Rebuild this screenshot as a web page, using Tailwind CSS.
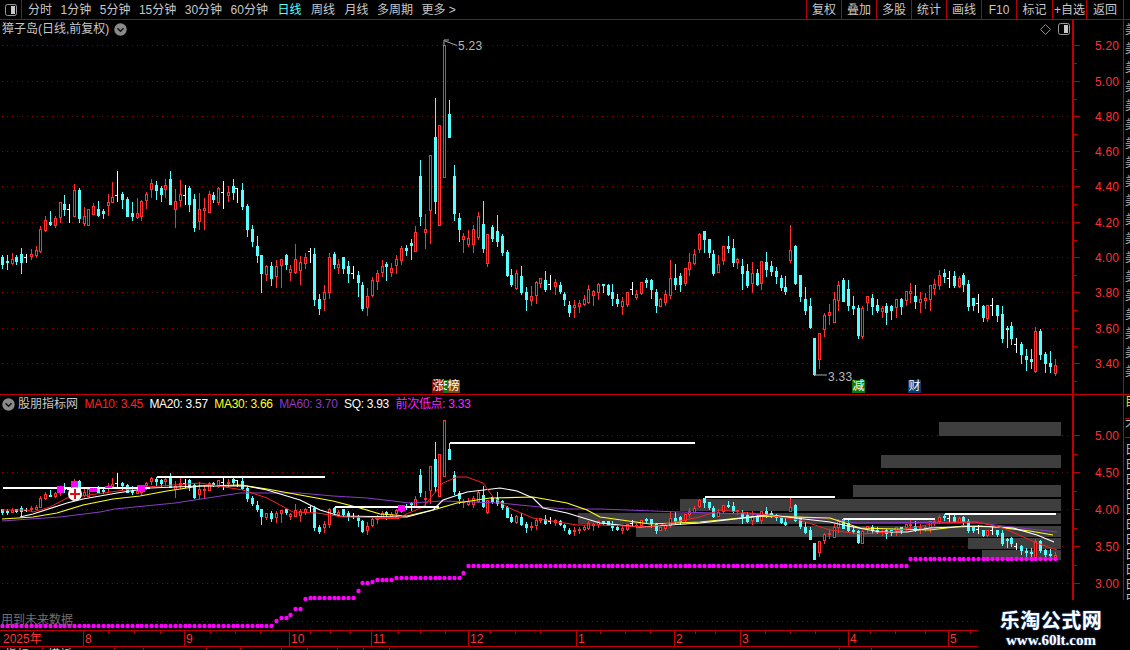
<!DOCTYPE html>
<html lang="zh-CN">
  <head>
    <meta charset="UTF-8" />
    <title>獐子岛 日线</title>
    <script src="https://cdn.jsdelivr.net/npm/@tailwindcss/browser@4"></script>
  </head>
  <body class="bg-black">
    <div class="relative w-[1130px] h-[650px] overflow-hidden bg-black text-[#c8c8c8] text-[12px] font-['Liberation_Sans','Noto_Sans_CJK_SC',sans-serif]">
      <!-- Top toolbar -->
      <header class="flex h-[20px] border-b border-[#b00000] leading-[20px]">
        <div class="flex w-[22px] items-center justify-center border-r border-[#b00000]">
          <svg width="12" height="12" viewBox="0 0 12 12"><rect x="0.5" y="0.5" width="11" height="11" rx="2" fill="none" stroke="#9a9a9a" /><rect x="6" y="2" width="4" height="8" fill="#c8c8c8" /></svg>
        </div>
        <nav class="flex gap-[8.5px] pl-[6px]">
          <span>分时</span><span>1分钟</span><span>5分钟</span><span>15分钟</span><span>30分钟</span><span>60分钟</span>
          <span class="text-[#55ffff] ml-[1px]">日线</span><span class="ml-[1px]">周线</span><span class="ml-[1px]">月线</span><span>多周期</span><span>更多 &gt;</span>
        </nav>
        <div class="ml-auto flex text-center">
          <span class="w-[35px] border-l border-[#b00000]">复权</span>
          <span class="w-[35px] border-l border-[#b00000]">叠加</span>
          <span class="w-[35px] border-l border-[#b00000]">多股</span>
          <span class="w-[35px] border-l border-[#b00000]">统计</span>
          <span class="w-[35px] border-l border-[#b00000]">画线</span>
          <span class="w-[35px] border-l border-[#b00000]">F10</span>
          <span class="w-[36px] border-l border-[#b00000]">标记</span>
          <span class="w-[34px] border-l border-[#b00000] whitespace-nowrap">+自选</span>
          <span class="w-[37px] border-l border-[#b00000]">返回</span>
          <span class="w-[7px] border-l border-[#b00000]"></span>
        </div>
      </header>

      <!-- Price panel -->
      <section class="flex h-[375px] border-b border-[#c00000]">
        <div class="relative w-[1072px]">
          <svg id="price" class="absolute inset-0" width="1072" height="374" viewBox="0 20 1072 374" shape-rendering="crispEdges"></svg>
          <div class="absolute left-[2px] top-[1px] flex items-center gap-[5px] leading-[16px]">
            <span>獐子岛(日线,前复权)</span>
            <svg width="13" height="13" viewBox="0 0 13 13"><circle cx="6.5" cy="6.5" r="6.2" fill="#8a8a8a" /><path d="M3.5 5.2 6.5 8.2 9.5 5.2" fill="none" stroke="#111" stroke-width="1.5" /></svg>
          </div>
          <div class="absolute right-[2px] top-[3px] flex items-center gap-[7px]">
            <svg width="11" height="11" viewBox="0 0 11 11"><path d="M5.5 .5 10.5 5.5 5.5 10.5 .5 5.5Z" fill="none" stroke="#8a8a8a" /></svg>
            <svg width="12" height="12" viewBox="0 0 12 12"><rect x="0.5" y="0.5" width="11" height="11" rx="2" fill="none" stroke="#9a9a9a" /><rect x="6" y="2" width="4" height="8" fill="#c8c8c8" /></svg>
          </div>
          <span class="absolute left-[458px] top-[19px] text-[12px] leading-[15px] tracking-[0.3px] text-[#b8b8b8]">5.23</span>
          <span class="absolute left-[828px] top-[350px] text-[12px] leading-[15px] tracking-[0.3px] text-[#b8b8b8]">3.33</span>
          <!-- Event tags -->
          <span class="absolute left-[432px] top-[360px] h-[13px] w-[13px] bg-[#7a0c0c] text-center text-[12px] leading-[13px] text-white">涨</span>
          <span class="absolute left-[443px] top-[360px] h-[13px] w-[5px] overflow-hidden bg-[#0a7a0a] text-[12px] leading-[13px] text-white">5</span>
          <span class="absolute left-[447px] top-[360px] h-[13px] w-[13px] bg-[#7a4a10] text-center text-[12px] leading-[13px] text-white">榜</span>
          <span class="absolute left-[852px] top-[360px] h-[13px] w-[13px] bg-[#0a7a0a] text-center text-[12px] leading-[13px] text-white">减</span>
          <span class="absolute left-[908px] top-[360px] h-[13px] w-[13px] bg-[#0a3a6e] text-center text-[12px] leading-[13px] text-white">财</span>
        </div>
        <div class="w-[51px] border-l-2 border-[#c00000]">
          <svg id="priceAxis" width="49" height="374" viewBox="0 20 49 374"></svg>
        </div>
        <div class="flex w-[7px] flex-col gap-[6px] overflow-hidden border-l border-[#c00000] pt-[4px] pl-[1px] text-[12px] leading-[13px] text-[#b0b0b0]">
          <span>美</span><span>美</span><span>美</span><span>美</span><span>美</span><span>美</span><span>美</span><span>美</span><span>美</span><span>美</span><span>美</span><span>美</span><span>美</span><span>美</span><span>美</span><span>美</span><span>美</span><span>美</span><span>美</span>
        </div>
      </section>

      <!-- Indicator panel -->
      <section class="flex h-[235px]">
        <div class="relative w-[1072px]">
          <svg id="indicator" class="absolute inset-0" width="1072" height="235" viewBox="0 395 1072 235" shape-rendering="crispEdges"></svg>
          <div class="absolute left-[2px] top-[1px] flex items-center gap-[6.5px] leading-[16px] whitespace-nowrap">
            <svg class="-mr-[3.5px]" width="13" height="13" viewBox="0 0 13 13"><circle cx="6.5" cy="6.5" r="6.2" fill="#8a8a8a" /><path d="M3.5 5.2 6.5 8.2 9.5 5.2" fill="none" stroke="#111" stroke-width="1.5" /></svg>
            <span>股朋指标网</span>
            <span class="tracking-[-0.3px] text-[#ff2020]">MA10: 3.45</span>
            <span class="tracking-[-0.3px] text-white">MA20: 3.57</span>
            <span class="tracking-[-0.3px] text-[#ffff20]">MA30: 3.66</span>
            <span class="tracking-[-0.3px] text-[#8a3cc8]">MA60: 3.70</span>
            <span class="tracking-[-0.3px] text-white">SQ: 3.93</span>
            <span class="tracking-[-0.3px] text-[#ff20ff]">前次低点: 3.33</span>
          </div>
          <span class="absolute left-[1px] top-[218px] text-[12px] leading-[14px] text-[#707070]">用到未来数据</span>
        </div>
        <div class="w-[51px] border-l-2 border-[#c00000]">
          <svg id="indicatorAxis" width="49" height="235" viewBox="0 395 49 235"></svg>
        </div>
        <div class="flex w-[7px] flex-col overflow-hidden border-l border-[#c00000] pl-[1px] text-[12px] leading-[15px] text-[#c0c0c0]">
          <span class="h-[23px] text-[#e0e000]">目</span>
          <span class="h-[19px] border-t border-[#c00000]">不</span>
          <span class="border-t border-[#c00000] pt-[5px]">日</span>
          <span>日</span><span>日</span><span>日</span><span>日</span><span>日</span><span>日</span><span>日</span><span>日</span><span>日</span><span>日</span><span>日</span>
        </div>
      </section>

      <!-- Time axis -->
      <footer class="relative h-[17px] border-y border-[#c00000] text-[12px] leading-[17px] text-[#ff3232]">
        <div class="flex h-full">
          <span class="w-[83px] pl-[3px]">2025年</span>
          <span class="w-[101px] border-l border-[#c00000] pl-[1px]">8</span>
          <span class="w-[105px] border-l border-[#c00000] pl-[1px]">9</span>
          <span class="w-[82px] border-l border-[#c00000] pl-[1px]">10</span>
          <span class="w-[97px] border-l border-[#c00000] pl-[1px]">11</span>
          <span class="w-[108px] border-l border-[#c00000] pl-[1px]">12</span>
          <span class="w-[98px] border-l border-[#c00000] pl-[1px]">1</span>
          <span class="w-[66px] border-l border-[#c00000] pl-[1px]">2</span>
          <span class="w-[108px] border-l border-[#c00000] pl-[1px]">3</span>
          <span class="w-[100px] border-l border-[#c00000] pl-[1px]">4</span>
          <span class="border-l border-[#c00000] pl-[1px]">5</span>
        </div>
        <svg id="timeTicks" class="absolute inset-0" width="978" height="4"></svg>
      </footer>

      <!-- Bottom tabs, mostly cut off by the window -->
      <div class="flex h-[3px] overflow-hidden pt-[1px] text-[12px] leading-[14px] text-[#c8c8c8]">
        <span class="w-[43px] border-r border-[#c00000] pl-[5px]">指标</span>
        <span class="w-[72px] border-r border-[#c00000] pl-[5px]">模板</span>
        <span class="w-[29px] border-r border-[#c00000]"></span>
        <span class="w-[63px] border-r border-[#c00000]"></span>
        <span class="w-[34px] border-r border-[#c00000]"></span>
        <span class="w-[41px] border-r border-[#c00000]"></span>
        <span class="w-[26px] border-r border-[#c00000]"></span>
        <span class="w-[30px] border-r border-[#c00000]"></span>
        <span class="w-[26px] border-r border-[#c00000]"></span>
        <span class="w-[26px] border-r border-[#c00000]"></span>
        <span class="w-[450px] border-r border-[#c00000]"></span>
        <span class="w-[32px] border-r border-[#c00000]"></span>
      </div>

      <!-- Site watermark over the corner of the chart -->
      <div class="absolute right-0 bottom-0 flex h-[50px] w-[152px] flex-col items-center bg-black pr-[6px] pt-[7px] text-white">
        <span class="text-[20px] leading-[25px] font-bold tracking-[0.5px] whitespace-nowrap font-['Noto_Sans_CJK_SC',sans-serif] [text-shadow:0_0_2px_#3a6fd0]">乐淘公式网</span>
        <span class="text-[15px] leading-[17px] font-bold whitespace-nowrap font-['Liberation_Serif',serif] [text-shadow:0_0_2px_#3a6fd0]">www.60lt.com</span>
      </div>
    </div>

    <script>
      // [type, zoomX, high, bodyTop, bodyBottom, low], in crop pixels
      const segments = [
        [0, 160, `c 7 285 291 312 324|c 22 286 303 305 327|r 37 280 298 310 313|c 50 286 291 303 312|c 64 265 282 306 339|w 79 283 292 292 306|r 94 267 282 288 297|r 109 258 271 285 290|r 122 198 207 274 277|r 136 168 180 210 214|c 151 153 186 192 195|r 166 168 174 195 201|r 181 126 126 170 186|c 194 105 132 147 165|w 208 132 148 150 187|r 223 72 91 167 168|c 238 85 91 174 187|r 253 141 169 190 194|r 265 148 148 194 196|r 280 129 138 162 163|c 295 123 147 164 168|c 310 147 153 159 174|r 325 103 127 134 165|r 337 66 112 125 126|w 352 33 105 107 123|c 367 96 102 117 144|c 382 111 117 168 168|c 397 126 159 168 180|r 412 114 160 171 174|r 424 120 123 167 180|r 439 96 102 120 144|r 454 57 70 87 111|c 469 63 75 90 117|c 484 78 84 102 123|r 496 57 76 87 111|c 511 33 57 132 132|r 526 87 124 147 201|r 541 60 102 120 138|w 556 75 106 108 132|c 568 78 84 132 153|c 583 102 117 201 213|r 598 99 148 183 207|r 613 114 144 150 207|r 628 93 102 155 156|c 640 96 105 117 126|r 655 81 84 126 132|w 670 63 97 99 144|r 685 78 96 105 123|c 700 57 78 96 117|w 712 84 85 87 126|c 727 69 90 138 147|c 742 132 138 207 228|c 757 195 207 243 258`],
        [255, 190, `c 7 138 168 195 216|c 19 195 195 249 306|r 34 225 228 252 270|c 49 216 228 264 285|r 64 210 228 258 291|r 79 207 207 225 291|c 94 192 195 222 237|r 106 225 237 246 270|r 121 162 207 246 249|r 136 198 216 240 282|r 151 189 201 219 234|w 166 174 182 184 216|c 178 174 192 327 345|c 193 312 327 354 372|r 208 285 306 327 360|r 223 189 201 306 324|c 238 186 192 222 234|r 250 207 222 231 249|c 265 201 201 234 249|c 280 213 228 249 276|w 295 228 250 252 264|c 310 243 255 276 318|c 322 276 285 354 360|r 337 294 318 351 375|r 352 261 270 315 318|r 367 240 249 273 297|r 382 210 228 246 258|c 394 216 222 228 270|r 409 219 234 246 258|r 424 195 207 225 249|r 439 168 174 210 222|c 454 165 174 180 195|c 469 147 159 165 207|r 481 108 126 183 183`],
        [380, 30, `c 121 390 438 558 585|r 136 552 597 606 654|r 151 375 375 540 639|c 166 204 321 513 549|r 178 285 285 585 585|r 193 45 45 441 441|c 208 210 252 321 321|c 223 405 438 549 570|c 238 549 564 597 633|r 250 609 618 627 666|r 265 600 624 642 648|r 280 585 597 642 666|r 295 546 558 621 627|c 310 513 582 654 666|r 322 612 612 699 708|c 337 585 591 624 633|c 352 555 603 633 648|c 367 612 618 666 675`],
        [505, 220, `c 7 90 96 165 168|c 19 147 165 192 198|r 34 150 159 204 207|c 49 138 168 216 222|c 64 201 216 237 270|r 79 198 228 240 255|r 94 183 186 225 249|r 106 174 174 189 201|c 121 153 180 207 213|w 136 165 192 194 207|r 151 177 186 198 222|c 166 186 195 213 219|c 178 216 222 237 255|c 193 243 255 276 288|r 208 240 255 261 291|r 223 240 249 258 276|r 238 225 237 252 255|r 250 195 207 246 249|r 265 210 213 225 255|r 280 189 192 216 237|c 295 192 193 195 216|c 310 192 195 222 225|c 322 192 216 234 255|c 337 222 237 249 258|r 352 231 243 258 282|r 367 216 216 252 258|w 382 186 208 210 222|r 394 210 222 231 237|r 409 186 186 219 222|c 424 174 180 186 201|c 439 177 180 207 234|c 454 207 216 255 276|r 466 234 237 258 258|r 481 210 222 246 255|r 496 120 174 225 234|c 511 132 174 192 207|c 526 159 168 192 213|r 541 144 144 189 195|r 553 99 126 147 165|r 568 87 102 129 132|r 583 39 42 87 96|c 598 33 33 57 96|c 613 57 57 96 111|c 625 90 102 159 165|r 640 105 132 156 156|r 655 78 78 120 132|c 670 48 78 84 96|c 685 57 84 126 138|r 697 114 117 126 144|c 712 117 138 159 207|c 727 132 153 195 201|r 742 126 159 189 216|c 757 147 159 192 195|r 769 123 123 189 207|c 784 96 126 147 168|c 799 123 138 153 165|c 814 141 153 168 189`],
        [780, 220, `c 4 165 174 201 210|c 16 168 201 213 222|r 31 15 91 120 126|c 46 75 78 189 192|c 61 165 165 228 243|c 76 201 237 270 282|c 91 234 258 321 324|c 103 354 354 462 465|r 118 339 339 417 444|r 133 279 285 327 348|r 148 252 276 285 312|r 163 216 237 306 306|r 175 183 195 240 270|c 190 174 180 243 243|c 205 180 207 255 270|c 220 228 258 264 282|c 235 255 264 345 354|r 247 258 264 348 354|r 262 228 228 246 270|c 277 222 234 258 282|c 292 237 255 270 276|r 307 258 264 273 291|c 319 249 258 276 312|c 334 255 258 270 297|r 349 237 237 261 291|c 364 234 237 258 282|r 379 213 213 240 255|r 391 189 213 219 246|c 406 195 228 243 264|r 421 216 237 246 276|r 436 219 234 240 264|r 451 195 195 237 270|r 463 177 192 204 222|r 478 150 165 195 207|c 493 147 159 168 186|w 508 153 175 177 201|c 523 153 168 195 201|r 538 168 174 198 201|c 550 159 165 192 213|c 565 180 192 258 270|c 580 234 234 255 270|w 595 222 248 250 276|c 610 255 258 291 303|r 622 255 255 294 303|w 637 234 256 258 285|c 652 255 255 285 303|c 667 258 282 354 366|c 682 318 324 327 381|c 694 306 318 354 372|w 709 354 372 374 396|c 724 366 372 402 429|c 739 387 408 417 450|c 754 387 417 423 444|r 766 321 333 453 456|c 781 327 333 402 417|c 796 396 402 429 456|c 811 393 429 438 456|r 826 417 435 459 465`],
      ];

      const candles = [];
      for (const [ox, oy, text] of segments) {
        for (const row of text.split("|")) {
          const p = row.split(" ");
          candles.push({
            type: p[0],
            x: Math.floor(ox + p[1] / 3),
            hi: oy + p[2] / 3,
            top: oy + p[3] / 3,
            bot: oy + p[4] / 3,
            lo: oy + p[5] / 3,
          });
        }
      }

      const RED = "#ff3232", CYAN = "#55ffff", GRID = "#8a0000";
      const rect = (x, y, w, h, fill) => `<rect x="${x}" y="${y}" width="${w}" height="${h}" fill="${fill}"/>`;
      const dotted = (y, w) => `<line x1="2" x2="${w}" y1="${y}.5" y2="${y}.5" stroke="${GRID}" stroke-dasharray="1 4"/>`;
      const line = (pts, color, width = 1) =>
        `<polyline shape-rendering="auto" fill="none" stroke="${color}" stroke-width="${width}" points="${pts.map((p) => p.join(",")).join(" ")}"/>`;

      function drawCandles(map) {
        let s = "";
        for (const c of candles) {
          const hi = Math.round(map(c.hi)), lo = Math.round(map(c.lo));
          const top = Math.round(map(c.top));
          const bot = Math.max(Math.round(map(c.bot)), top + 1);
          if (c.type === "w") {
            s += rect(c.x, hi, 1, lo - hi + 1, "#fff") + rect(c.x - 2, top, 2, 1, "#fff");
            continue;
          }
          const color = c.type === "c" ? CYAN : RED;
          s += rect(c.x, hi, 1, lo - hi + 1, color);
          s += rect(c.x - 1, top, 3, bot - top + 1, color);
          if (c.type === "r" && bot - top > 1) s += rect(c.x, top + 1, 1, bot - top - 1, "#000");
        }
        return s;
      }

      // Price panel
      let price = "";
      for (const y of [45, 81, 116, 151, 186, 222, 257, 292, 328, 363]) price += dotted(y, 1072);
      price += drawCandles((y) => y);
      price += `<path shape-rendering="auto" d="M444 46V40H449M445 41 457 45.5" fill="none" stroke="#aaa"/>`;
      price += `<path shape-rendering="auto" d="M815 372V376M816 375H827" fill="none" stroke="#aaa"/>`;
      document.getElementById("price").innerHTML = price;

      // Axes
      function axis(labels, minorGap) {
        let s = "";
        for (const [y, label] of labels) {
          s += rect(0, y, 6, 1, "#c00000") + rect(0, y + minorGap, 3, 1, "#c00000");
          s += `<text x="21" y="${y + 5}" fill="${RED}" font-size="12" letter-spacing="0.2" font-family="Liberation Sans">${label}</text>`;
        }
        return s;
      }
      document.getElementById("priceAxis").innerHTML = axis(
        [[45, "5.20"], [81, "5.00"], [116, "4.80"], [151, "4.60"], [186, "4.40"], [222, "4.20"], [257, "4.00"], [292, "3.80"], [328, "3.60"], [363, "3.40"]],
        18
      );
      document.getElementById("indicatorAxis").innerHTML = axis(
        [[435, "5.00"], [472, "4.50"], [509, "4.00"], [546, "3.50"], [583, "3.00"]],
        19
      );

      // Indicator panel
      let ind = "";
      for (const y of [435, 472, 509, 546, 583, 621]) ind += dotted(y, 1072);
      // Chip distribution bars
      for (const [x, y, h] of [[939, 422, 14], [881, 455, 13], [853, 485, 12], [680, 499, 12], [578, 513, 11], [636, 526, 11], [968, 538, 11], [982, 550, 10]]) {
        ind += rect(x, y, 1061 - x, h, "#3e3e3e");
      }
      ind += drawCandles((y) => 435 + (5 - (5.2 - (y - 45) / 176.7)) * 74.4);

      const ma60 = [[2, 521], [30, 519], [60, 517], [100, 512], [115, 509], [175, 503], [240, 493], [300, 493], [333, 496], [367, 498], [410, 503], [443, 501], [500, 503], [540, 507], [567, 509], [600, 509], [680, 512], [750, 514], [830, 519], [857, 523], [973, 522], [1003, 526], [1057, 532]];
      const ma30 = [[2, 519], [33, 517], [57, 513], [83, 505], [113, 499], [140, 496], [167, 491], [200, 486], [240, 485], [267, 489], [300, 495], [333, 501], [360, 508], [380, 514], [407, 516], [433, 510], [457, 503], [490, 498], [533, 497], [567, 503], [587, 510], [600, 517], [650, 524], [700, 522], [760, 516], [830, 518], [860, 528], [930, 530], [963, 526], [997, 527], [1030, 531], [1053, 535]];
      const ma20 = [[20, 517], [33, 514], [67, 503], [83, 499], [117, 493], [150, 488], [200, 486], [247, 486], [267, 490], [300, 500], [320, 510], [340, 516], [407, 517], [433, 510], [443, 500], [467, 492], [500, 488], [517, 491], [533, 498], [543, 508], [567, 513], [600, 523], [640, 527], [700, 523], [770, 515], [830, 522], [843, 525], [880, 532], [907, 532], [930, 528], [980, 526], [1013, 528], [1037, 535], [1054, 542]];
      const ma10 = [[2, 510], [27, 510], [33, 512], [50, 507], [67, 498], [147, 487], [200, 483], [243, 490], [267, 498], [293, 512], [317, 513], [343, 517], [397, 518], [423, 507], [443, 483], [457, 477], [467, 477], [483, 483], [493, 497], [507, 507], [533, 518], [577, 525], [600, 525], [650, 527], [700, 517], [720, 510], [760, 514], [800, 520], [830, 530], [860, 534], [890, 532], [937, 523], [977, 522], [1003, 528], [1037, 543], [1057, 550]];
      ind += line(ma60, "#8a3cc8") + line(ma30, "#ffff20", 1.2) + line(ma20, "#fff", 1.2) + line(ma10, "#ff2020");

      // Previous-low resistance segments
      for (const [x, y, w] of [[3, 487, 147], [157, 476, 168], [335, 506, 104], [450, 442, 245], [705, 496, 130], [844, 518, 91], [945, 513, 111]]) {
        ind += rect(x, y, w, 2, "#fff");
      }
      ind += rect(375, 517, 24, 2, "#ff2020");
      for (const [x, y, w, h] of [[57, 486, 7, 7], [71, 481, 7, 7], [90, 488, 7, 4], [105, 486, 7, 2], [138, 485, 7, 7], [398, 505, 7, 6]]) {
        ind += rect(x, y, w, h, "#ff00ff");
      }

      // Previous-low dots
      const steps = [[272, 626], [277, 621], [288, 618], [292, 615], [302, 609], [306, 599], [355, 598], [360, 591], [369, 583], [374, 582], [393, 580], [460, 578], [465, 573], [907, 566], [2000, 559]];
      for (const c of candles) {
        const y = steps.find((s) => c.x <= s[0])[1];
        ind += `<circle shape-rendering="auto" cx="${c.x + 0.5}" cy="${y}" r="2.2" fill="#ff00ff"/>`;
      }

      // Buy marker
      ind += `<circle shape-rendering="auto" cx="75" cy="494" r="7" fill="#fff"/>`;
      ind += rect(70, 493, 10, 2, "#e01010") + rect(74, 489, 2, 10, "#e01010");
      document.getElementById("indicator").innerHTML = ind;

      // Small ticks along the time axis
      let ticks = "";
      for (const x of [108, 134, 160, 210, 235, 260, 310, 330, 350, 398, 420, 445, 490, 515, 540, 600, 625, 650, 695, 715, 765, 790, 815, 870, 895, 925, 970]) {
        ticks += rect(x, 0, 1, 3, "#c00000");
      }
      document.getElementById("timeTicks").innerHTML = ticks;
    </script>
  </body>
</html>
